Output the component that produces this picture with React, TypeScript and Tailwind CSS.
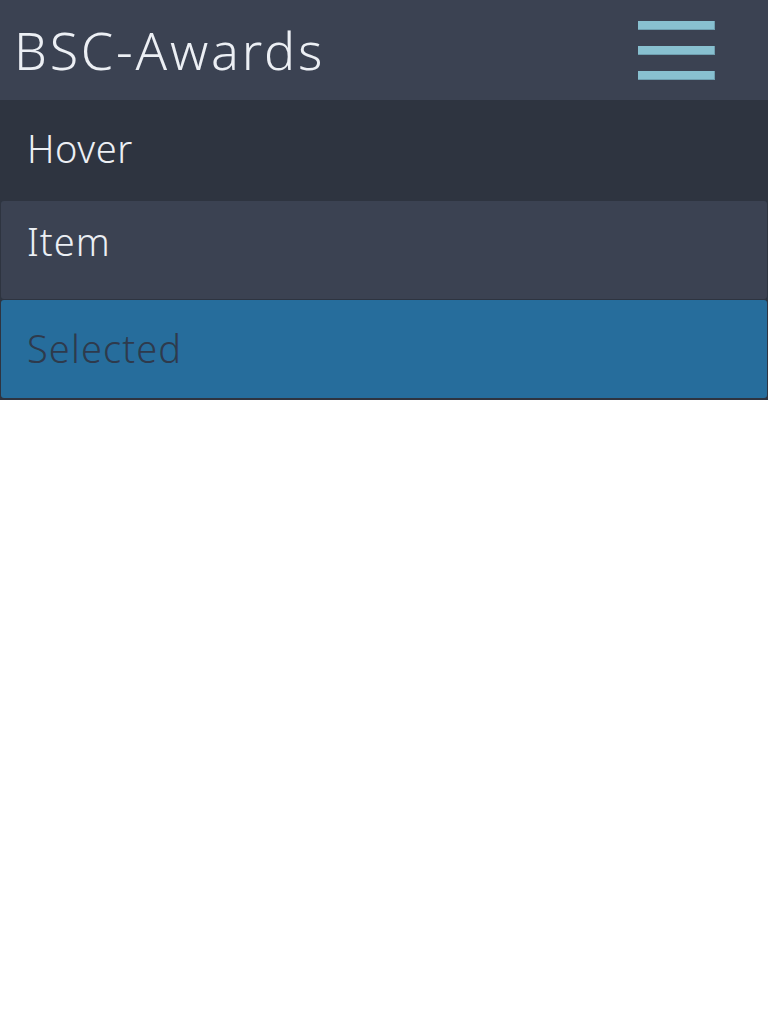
import React from "react";

export default function App() {
  const font = { fontFamily: '"Noto Sans", "Open Sans", sans-serif' };
  return (
    <div className="w-[768px] min-h-[1024px] bg-white" style={font}>
      <header className="h-[100px] bg-[#3b4252] flex items-center justify-between pl-[14px] pr-[53px]">
        <h1 className="text-[52px] leading-none tracking-[2.8px] text-[#eceff4] font-light">BSC-Awards</h1>
        <button className="flex flex-col gap-[16px] w-[77px]" aria-label="menu">
          <span className="block h-[9px] bg-[#88c0d0] border-r border-b border-[#6f9fb0]" />
          <span className="block h-[9px] bg-[#88c0d0] border-r border-b border-[#6f9fb0]" />
          <span className="block h-[9px] bg-[#88c0d0] border-r border-b border-[#6f9fb0]" />
        </button>
      </header>
      <nav className="bg-[#2e3440] pb-[2px]">
        <div className="h-[100px] flex items-center pl-[27px] pb-[3px] text-[38px] tracking-[0.6px] font-light text-[#eceff4]">Hover</div>
        <div className="h-[100px] px-px py-px">
          <div className="h-full rounded-[3px] bg-[#3b4252] flex items-center pl-[26px] pb-[18px] text-[38px] tracking-[1px] font-light text-[#eceff4]">
            Item
          </div>
        </div>
        <div className="h-[98px] px-px">
          <div className="h-full rounded-[3px] bg-[#266d9c] flex items-center pl-[26px] pb-[1px] text-[38px] tracking-[1.1px] font-light text-[#2e3a4c]">
            Selected
          </div>
        </div>
      </nav>
    </div>
  );
}
